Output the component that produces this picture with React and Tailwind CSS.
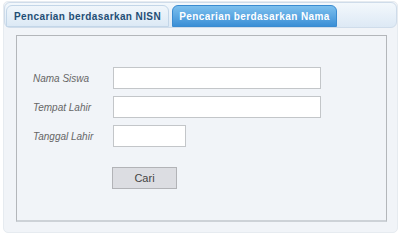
import { useState } from "react";

const fields = [
  { label: "Nama Siswa", width: "w-[208px]" },
  { label: "Tempat Lahir", width: "w-[208px]" },
  { label: "Tanggal Lahir", width: "w-[73px]" },
];

const App = () => {
  const [tab, setTab] = useState("nama");

  return (
    <div className="w-[400px] h-[235px] bg-white pt-[1px] pl-[3px] font-['Liberation_Sans',Arial,sans-serif]">
      <div className="w-[395px] h-[232px] rounded-[5px] bg-[#f1f4f8] border border-[#e6ebf0]">
        {/* tab strip */}
        <div className="h-[26px] rounded-[6px] border border-[#cfdcea] bg-gradient-to-b from-[#f3f8fc] to-[#dde9f5] flex items-end pl-[1px] gap-[3px]">
          <button
            onClick={() => setTab("nisn")}
            className={
              tab === "nisn"
                ? "w-[163px] h-[22px] rounded-t-[6px] border border-[#3a8bd0] bg-gradient-to-b from-[#7cc0ee] to-[#3a8fd6] text-white text-[10px] font-bold tracking-[0.4px] whitespace-nowrap"
                : "w-[163px] h-[22px] rounded-t-[6px] border border-[#c3d6e8] bg-gradient-to-b from-[#f0f6fb] to-[#dce9f5] text-[#1f4e75] text-[10px] font-bold tracking-[0.4px] whitespace-nowrap"
            }
          >
            Pencarian berdasarkan NISN
          </button>
          <button
            onClick={() => setTab("nama")}
            className={
              tab === "nama"
                ? "w-[165px] h-[22px] rounded-t-[6px] border border-[#3a8bd0] bg-gradient-to-b from-[#7cc0ee] to-[#3a8fd6] text-white text-[10px] font-bold tracking-[0.4px] whitespace-nowrap"
                : "w-[165px] h-[22px] rounded-t-[6px] border border-[#c3d6e8] bg-gradient-to-b from-[#f0f6fb] to-[#dce9f5] text-[#1f4e75] text-[10px] font-bold tracking-[0.4px] whitespace-nowrap"
            }
          >
            Pencarian berdasarkan Nama
          </button>
        </div>

        {/* panel */}
        <div className="ml-[12px] mt-[7px] w-[371px] h-[187px] border border-[#b3b6ba] border-b-[2px] border-b-[#cdd2d7] bg-[#f1f4f8] pl-[16px] pt-[31px]">
          <div className="flex flex-col gap-[7px]">
            {fields.map((f) => (
              <div key={f.label} className="flex items-center h-[22px]">
                <span className="w-[80px] italic text-[10px] text-[#666]">
                  {f.label}
                </span>
                <input
                  type="text"
                  className={`${f.width} h-[22px] bg-white border border-[#c3c6c9] outline-none`}
                />
              </div>
            ))}
          </div>
          <button className="ml-[79px] mt-[20px] w-[65px] h-[22px] bg-[#dcdde2] border border-[#b2b3b7] text-[11px] text-[#444]">
            Cari
          </button>
        </div>
      </div>
    </div>
  );
};

export default App;
